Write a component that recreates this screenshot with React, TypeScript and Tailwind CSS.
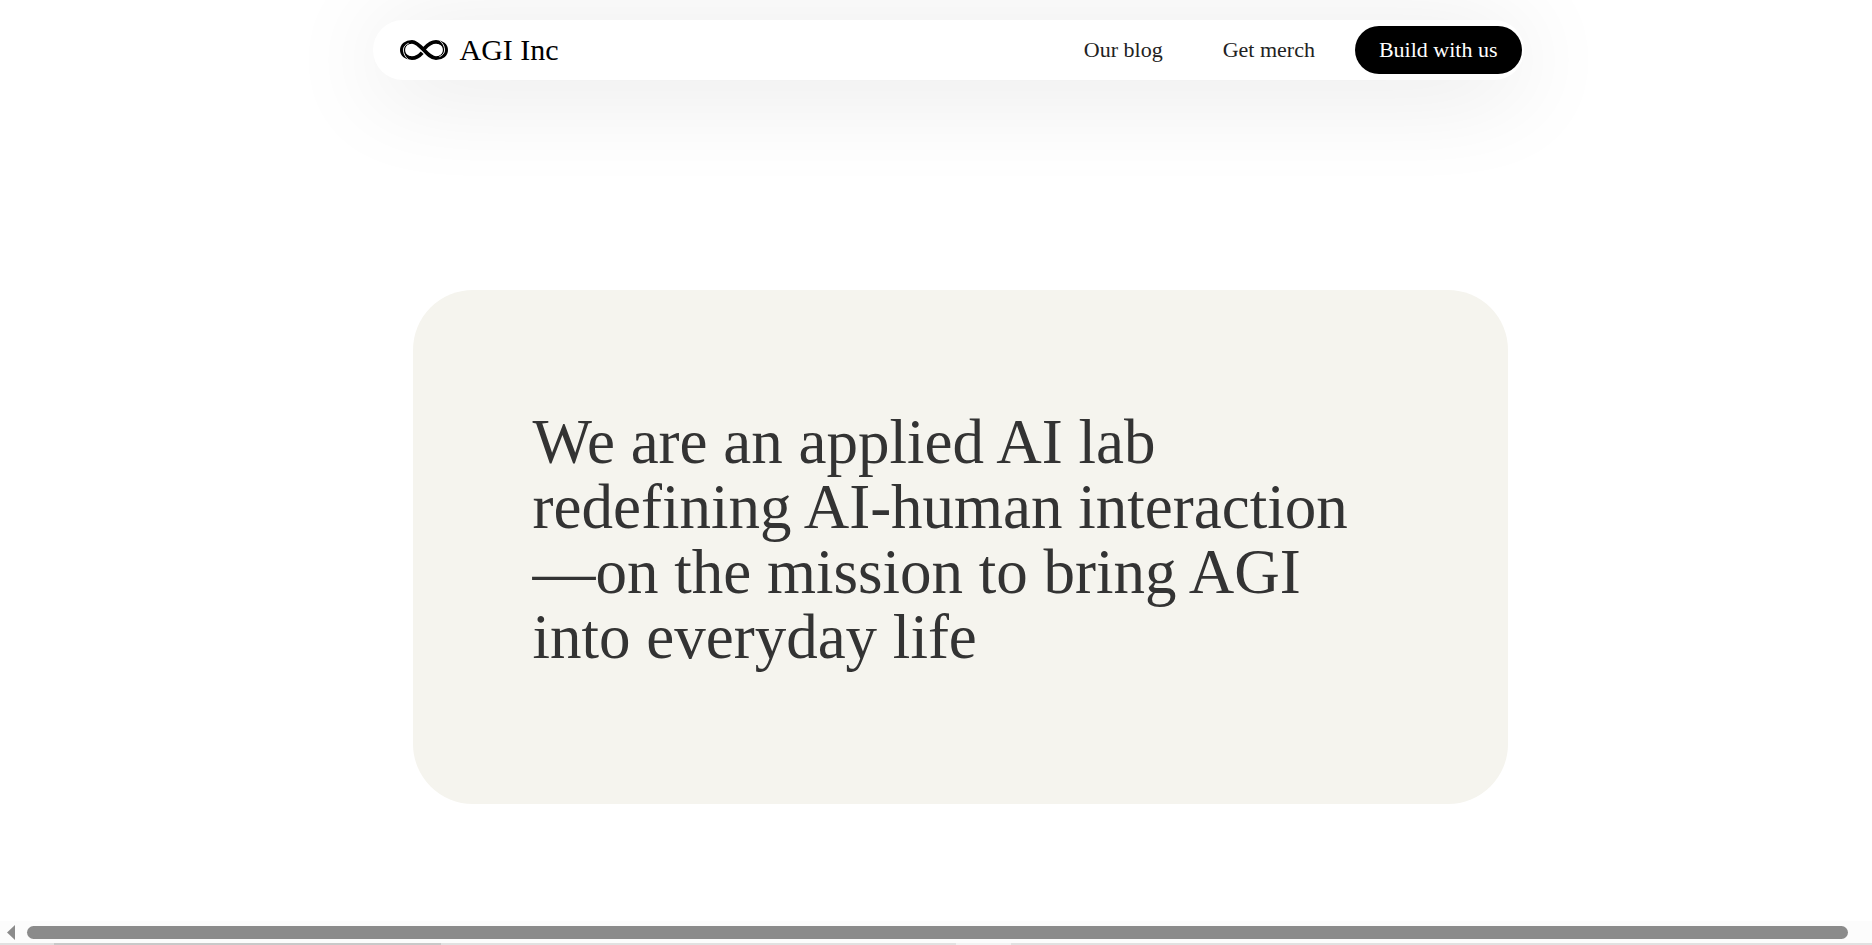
interface NavLinkProps {
  href: string;
  children: React.ReactNode;
}

const Logo = () => {
  return (
    <svg
      viewBox="0 0 48 20"
      className="h-5 w-12 overflow-visible"
      fill="none"
      aria-hidden="true"
    >
      {/* ribbon */}
      <g stroke="currentColor" strokeWidth="3.8">
        <path d="M22.2 12.8C19 16.4 16 18.2 12 18.2C6 18.2 1.9 14.6 1.9 10C1.9 5.4 6 1.8 12 1.8C20.5 1.8 27 18.2 36 18.2C42 18.2 46.1 14.6 46.1 10C46.1 5.4 42 1.8 36 1.8C31.5 1.8 28 4.4 24.4 8.4" />
      </g>
      <g stroke="currentColor" strokeWidth="1.6">
        <path d="M8.5 3.5C5.8 4.8 4.3 7.2 4.3 10C4.3 12.8 6 15.2 8.8 16.6" />
        <path d="M39.5 3.5C42.2 4.8 43.7 7.2 43.7 10C43.7 12.8 42 15.2 39.2 16.6" />
      </g>
      {/* slits at both ends */}
      <g stroke="white" strokeWidth="0.9">
        <path d="M8.6 3.3C5 4.8 3.4 7.2 3.4 10C3.4 13.6 5.2 17 8.6 19.8" />
        <path d="M39.4 0.2C42.8 3 44.6 6.4 44.6 10C44.6 12.8 43 15.2 39.4 16.7" />
      </g>
    </svg>
  );
};

const NavLink: React.FC<NavLinkProps> = ({ href, children }) => {
  return (
    <a href={href} className="text-[#222222]">
      {children}
    </a>
  );
};

const Header = () => {
  return (
    <header className="pt-5 pl-6">
      <div className="mx-auto flex h-15 max-w-[1151px] items-center justify-between rounded-full bg-white pr-0.5 pl-[27px] shadow-[0_10px_100px_rgba(0,0,0,0.11)]">
        <a href="/" className="flex items-center gap-3 text-[30px] leading-9">
          <Logo />
          AGI Inc
        </a>
        <nav className="flex items-center text-[22px] leading-7">
          <div className="flex gap-15 pr-10">
            <NavLink href="/blog">Our blog</NavLink>
            <NavLink href="/merch">Get merch</NavLink>
          </div>
          <button className="h-12 rounded-full bg-black px-6 text-white">
            Build with us
          </button>
        </nav>
      </div>
    </header>
  );
};

const Mission = () => {
  return (
    <section className="mt-[210px] pl-12">
      <div className="mx-auto max-w-[1095px] rounded-[60px] bg-[#f5f4ee] px-30 pt-30 pb-[134px]">
        <h1 className="text-[63px] leading-[65px] text-[#333333]">
          We are an applied AI lab redefining AI-human interaction—on the
          mission to bring AGI into everyday life
        </h1>
      </div>
    </section>
  );
};

const ScrollTrack = () => {
  return (
    <div>
      <div className="flex h-[22px] items-center bg-[#fcfcfc] pr-6 pl-[7px]">
        <svg viewBox="0 0 8 15" className="h-[15px] w-2" fill="#8b8b8b" aria-hidden="true">
          <path d="M8 0V15L0 7.5Z" />
        </svg>
        <div className="ml-3 h-[13px] flex-1 rounded-full bg-[#8b8b8b]" />
      </div>
      <div className="flex h-0.5 bg-[#e1e1e1]">
        <div className="ml-[54px] w-[387px] bg-[#c9c9c9]" />
        <div className="ml-[515px] w-[55px] bg-[#f2f2f2]" />
      </div>
    </div>
  );
};

export default function App() {
  return (
    <div className="flex min-h-screen flex-col bg-white font-['Liberation_Serif',serif] text-black">
      <Header />
      <main className="flex-1">
        <Mission />
      </main>
      <ScrollTrack />
    </div>
  );
}
